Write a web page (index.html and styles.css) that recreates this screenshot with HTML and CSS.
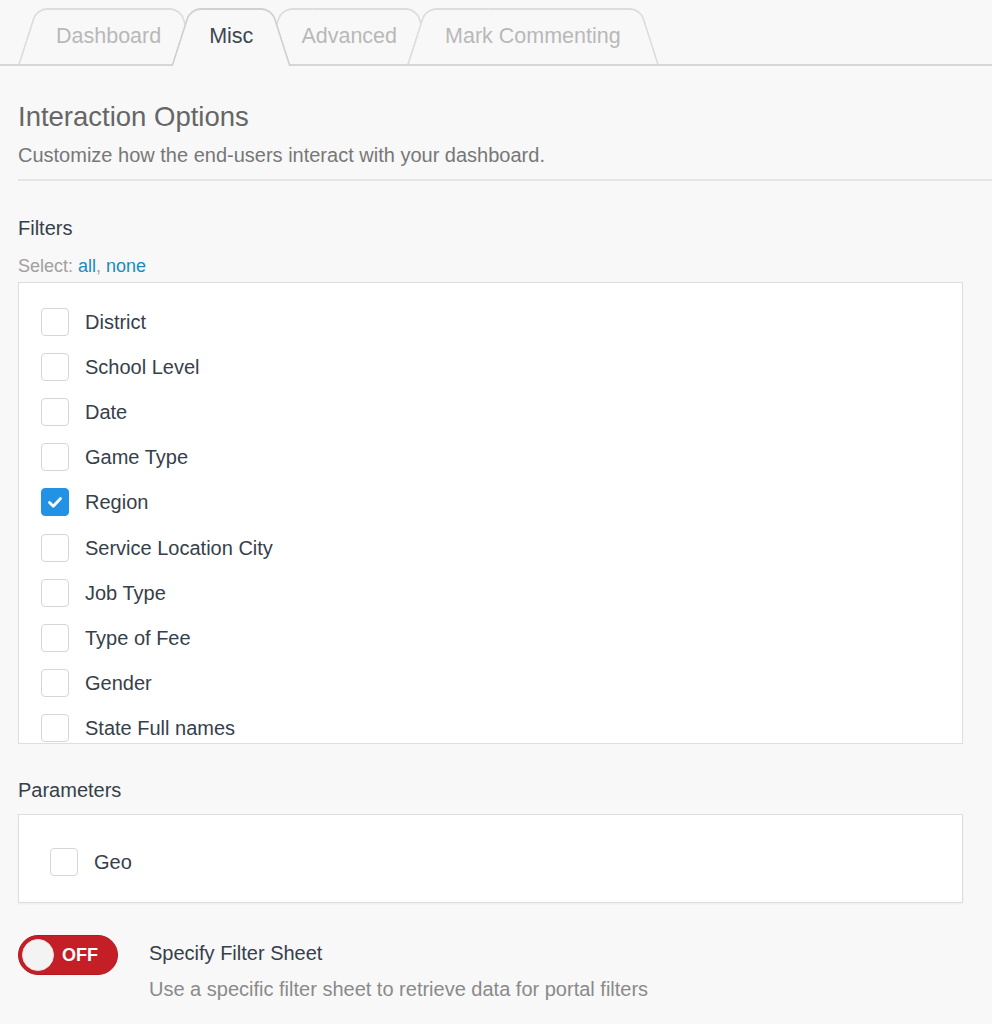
FILE: index.html
```html
<!DOCTYPE html>
<html lang="en">
<head>
<meta charset="utf-8">
<title>Interaction Options</title>
<link rel="stylesheet" href="styles.css">
</head>
<body>
<nav class="tabs">
  <div class="tab">Dashboard</div>
  <div class="tab is-active">Misc</div>
  <div class="tab">Advanced</div>
  <div class="tab">Mark Commenting</div>
</nav>

<main class="content">
  <h1 class="title">Interaction Options</h1>
  <p class="subtitle">Customize how the end-users interact with your dashboard.</p>
  <hr class="divider">

  <h2 class="section-label">Filters</h2>
  <div class="select-line">Select: <a class="link">all</a>, <a class="link">none</a></div>
  <div class="list-box">
    <div class="row"><span class="check"></span><span class="row-label">District</span></div>
    <div class="row"><span class="check"></span><span class="row-label">School Level</span></div>
    <div class="row"><span class="check"></span><span class="row-label">Date</span></div>
    <div class="row"><span class="check"></span><span class="row-label">Game Type</span></div>
    <div class="row"><span class="check is-checked"><svg viewBox="0 0 28 28" width="28" height="28"><path d="M8.5 14.5 L12.3 18.3 L19.5 10.5" fill="none" stroke="#fff" stroke-width="2.8" stroke-linecap="round" stroke-linejoin="round"/></svg></span><span class="row-label">Region</span></div>
    <div class="row"><span class="check"></span><span class="row-label">Service Location City</span></div>
    <div class="row"><span class="check"></span><span class="row-label">Job Type</span></div>
    <div class="row"><span class="check"></span><span class="row-label">Type of Fee</span></div>
    <div class="row"><span class="check"></span><span class="row-label">Gender</span></div>
    <div class="row"><span class="check"></span><span class="row-label">State Full names</span></div>
  </div>

  <h2 class="section-label params-label">Parameters</h2>
  <div class="param-box">
    <div class="param-row"><span class="check"></span><span class="row-label">Geo</span></div>
  </div>

  <div class="toggle-row">
    <div class="toggle"><span class="knob"></span><span class="toggle-text">OFF</span></div>
    <div class="toggle-info">
      <div class="toggle-title">Specify Filter Sheet</div>
      <div class="toggle-desc">Use a specific filter sheet to retrieve data for portal filters</div>
    </div>
  </div>
</main>
</body>
</html>
```

FILE: styles.css
```css
* { box-sizing: border-box; }
html, body { margin: 0; padding: 0; }
body {
  background: #f8f8f8;
  font-family: "Liberation Sans", Arial, sans-serif;
  color: #36404a;
  width: 992px;
  overflow: hidden;
}

/* Tabs */
.tabs {
  display: flex;
  padding: 8px 0 0 18px;
  border-bottom: 2px solid #d6d6d6;
}
.tab {
  position: relative;
  height: 58px;
  margin-bottom: -2px;
  margin-left: -28px;
  padding: 0 38px 2px;
  display: flex;
  align-items: center;
  font-size: 21.5px;
  color: #b8b8b8;
  white-space: nowrap;
}
.tab:first-child { margin-left: 0; }
.tab:nth-child(1) { z-index: 1; }
.tab:nth-child(2) { z-index: 2; }
.tab:nth-child(3) { z-index: 3; }
.tab:nth-child(4) { z-index: 4; }
.tab::before,
.tab::after {
  content: "";
  position: absolute;
  top: 0;
  bottom: 2px;
  width: 60%;
  background: #f8f8f8;
  border-top: 2px solid #dddddd;
  z-index: -1;
}
.tab::before {
  left: 0;
  border-left: 2px solid #dddddd;
  border-top-left-radius: 11px;
  transform-origin: 0 100%;
  transform: skewX(-17.8deg);
}
.tab::after {
  right: 0;
  border-right: 2px solid #dddddd;
  border-top-right-radius: 11px;
  transform-origin: 100% 100%;
  transform: skewX(17.8deg);
}
.tab.is-active { z-index: 10; color: #3a4652; }
.tab.is-active::before,
.tab.is-active::after {
  bottom: 0;
  border-color: #d0d0d0;
}

/* Content */
.content { padding-left: 18px; }
.title {
  margin: 35px 0 0;
  font-size: 27.5px;
  line-height: 32px;
  font-weight: normal;
  color: #666666;
}
.subtitle {
  margin: 10px 0 0;
  font-size: 20px;
  line-height: 24px;
  color: #777777;
}
.divider {
  margin: 12px 0 0;
  border: 0;
  border-top: 2px solid #e2e5e9;
  height: 0;
}
.section-label {
  margin: 35px 0 0;
  font-size: 20px;
  line-height: 24px;
  font-weight: normal;
  color: #36404a;
}
.select-line {
  margin-top: 15px;
  font-size: 18px;
  line-height: 22px;
  color: #a0a0a0;
}
.link { color: #1a8bbd; text-decoration: none; }

.list-box {
  margin-top: 5px;
  width: 945px;
  height: 462px;
  background: #ffffff;
  border: 1px solid #dedede;
  padding: 16px 0 0 22px;
  overflow: hidden;
}
.row {
  height: 45.2px;
  display: flex;
  align-items: center;
}
.check {
  flex: none;
  width: 28px;
  height: 28px;
  border: 1.5px solid #d6d6d6;
  border-radius: 4px;
  background: #ffffff;
  margin-right: 16px;
  display: flex;
}
.check.is-checked {
  background: #2293e4;
  border-color: #2293e4;
}
.check svg { margin: -1.5px; }
.row-label {
  font-size: 20px;
  line-height: 24px;
  color: #36404a;
}

.params-label { margin-top: 34px; }
.param-box {
  margin-top: 12px;
  width: 945px;
  background: #ffffff;
  border: 1px solid #dedede;
  box-shadow: 0 1px 2px rgba(0, 0, 0, 0.05);
  padding: 33px 31px 26px;
}
.param-row { display: flex; align-items: center; height: 28px; }

/* Toggle */
.toggle-row {
  margin-top: 32px;
  display: flex;
  align-items: flex-start;
}
.toggle {
  flex: none;
  width: 100px;
  height: 40px;
  border-radius: 20px;
  background: #c41e26;
  border: 1px solid #b51a21;
  display: flex;
  align-items: center;
  padding-left: 3px;
}
.knob {
  width: 32px;
  height: 32px;
  border-radius: 50%;
  background: #f3f3f3;
  border: 1px solid #e0e0e0;
}
.toggle-text {
  margin-left: 8px;
  color: #ffffff;
  font-weight: bold;
  font-size: 18px;
}
.toggle-info { margin-left: 31px; padding-top: 6px; }
.toggle-title {
  font-size: 20px;
  line-height: 24px;
  color: #36404a;
}
.toggle-desc {
  margin-top: 12px;
  font-size: 20px;
  line-height: 24px;
  color: #8a8a8a;
}
```
